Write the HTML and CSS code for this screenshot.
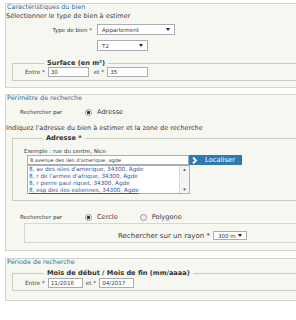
FILE: index.html
```html
<!DOCTYPE html>
<html>
  <head>
    <meta charset="utf-8" />
    <title>estimation</title>
    <link rel="stylesheet" href="styles.css">
  </head>
  <body>
    <div class="page">
      <div class="bloc bloc-bien">
        <div class="titre">Caractéristiques du bien</div>
        <div class="texte">Sélectionner le type de bien à estimer</div>
        <div class="ligne-type">
          <span class="libelle">Type de bien *</span>
          <span class="select type">Appartement<i class="fleche"></i></span>
        </div>
        <div class="ligne-type second">
          <span class="libelle"></span>
          <span class="select piece">T2<i class="fleche"></i></span>
        </div>
        <fieldset class="groupe surface">
          <legend>Surface (en m²)</legend>
          <div class="plage">
            <span>Entre *</span>
            <span class="champ">30</span>
            <span class="et">et *</span>
            <span class="champ">35</span>
          </div>
        </fieldset>
      </div>

      <div class="bloc bloc-perimetre">
        <div class="titre">Périmètre de recherche</div>
        <div class="choix">
          <span class="choix-libelle">Rechercher par</span>
          <span class="radio coche"></span>
          <span class="option">Adresse</span>
        </div>
        <div class="texte indication">Indiquez l'adresse du bien à estimer et la zone de recherche</div>
        <fieldset class="groupe adresse">
          <legend>Adresse *</legend>
          <div class="exemple">Exemple : rue du centre, Nice</div>
          <div class="saisie">
            <span class="champ long">8 avenue des iles d'amerique, agde</span>
            <span class="bouton">
              <svg width="6" height="7" viewBox="0 0 6 7"><polyline points="1,0.5 4,3.5 1,6.5" fill="none" stroke="#fff" stroke-width="1.8"/></svg>
              Localiser
            </span>
          </div>
          <div class="liste">
            <ul>
              <li>8, av des isles d'amerique, 34300, Agde</li>
              <li>8, r de l'armee d'afrique, 34300, Agde</li>
              <li>8, r pierre paul riquet, 34300, Agde</li>
              <li class="survol">8, esp des iles eoliennes, 34300, Agde</li>
            </ul>
            <div class="defilement">
              <span>▴</span>
              <span>▾</span>
            </div>
          </div>
        </fieldset>
        <div class="choix zone">
          <span class="choix-libelle">Rechercher par</span>
          <span class="radio coche"></span>
          <span class="option">Cercle</span>
          <span class="radio autre"></span>
          <span class="option">Polygone</span>
        </div>
        <div class="rayon">
          <span>Rechercher sur un rayon *</span>
          <span class="select metres">300 m<i class="fleche"></i></span>
        </div>
      </div>

      <div class="bloc bloc-periode">
        <div class="titre">Période de recherche</div>
        <fieldset class="groupe mois">
          <legend>Mois de début / Mois de fin (mm/aaaa)</legend>
          <div class="plage">
            <span>Entre *</span>
            <span class="champ court">11/2016</span>
            <span>et *</span>
            <span class="champ court">04/2017</span>
          </div>
        </fieldset>
      </div>
    </div>
  </body>
</html>
```

FILE: styles.css
```css
html { font-family: "DejaVu Sans", Verdana, sans-serif; }

body {
  margin: 0;
  background: #fff;
  color: #3a3a3a;
  overflow: hidden;
}

.page {
  width: 340px;
  padding: 3px 0 0 5px;
}

.bloc {
  background: #f6f7f0;
  border: 1px solid #d3d5cb;
  margin-bottom: 6px;
  padding: 0 0 6px;
}
.bloc-perimetre {
  margin-bottom: 7px;
  padding-bottom: 7px;
}
.bloc-periode {
  padding-bottom: 9px;
}

.titre {
  color: #2f6fa6;
  font-size: 6.4px;
  line-height: 7px;
  padding-left: 1px;
}

.texte {
  font-size: 6.5px;
  line-height: 9px;
  margin-top: 1px;
}

/* type de bien */
.ligne-type {
  display: flex;
  align-items: center;
  margin-top: 3px;
}
.ligne-type.second {
  margin-top: 5px;
}
.libelle {
  width: 86px;
  margin-right: 5px;
  text-align: right;
  font-size: 5.5px;
}

.select {
  display: flex;
  align-items: center;
  box-sizing: border-box;
  height: 11px;
  padding-left: 4px;
  border: 1px solid #a9aeb3;
  background: #fff;
  font-size: 5.6px;
}
.select.type { width: 78px; }
.select.piece { width: 51px; }
.select.metres {
  width: 34px;
  height: 9px;
  margin-left: 3px;
}
.fleche {
  margin: 0 4px 0 auto;
  border-left: 2px solid transparent;
  border-right: 2px solid transparent;
  border-top: 3px solid #222;
}

/* groupes */
.groupe {
  margin: 9px 0 0 6px;
  padding: 0 0 3px 12px;
  border: 1px solid #c9cbc1;
  min-width: 0;
}
.groupe legend {
  font-size: 6.6px;
  font-weight: bold;
  line-height: 7px;
  margin-left: 19px;
  padding: 0 3px;
  color: #333;
}

.plage {
  display: flex;
  align-items: center;
  gap: 3px;
  font-size: 5.7px;
}
.plage .et {
  margin-left: 2px;
}

.champ {
  box-sizing: border-box;
  width: 41px;
  height: 10px;
  padding-left: 2px;
  border: 1px solid #a9aeb3;
  background: #fff;
  font-size: 5.6px;
  line-height: 8px;
}
.champ.court { width: 35px; }

/* perimetre */
.choix {
  display: flex;
  align-items: center;
  margin-top: 6px;
  padding-left: 14px;
  line-height: 9px;
}
.choix-libelle {
  width: 65px;
  font-size: 5.5px;
}
.radio {
  box-sizing: border-box;
  width: 7px;
  height: 7px;
  border: 1px solid #9a9a9a;
  border-radius: 50%;
  background: #f2f2f2;
}
.radio.coche {
  background: radial-gradient(circle, #333 1.3px, #eee 1.8px);
}
.option {
  margin-left: 5px;
  font-size: 6.6px;
}
.zone {
  margin-top: 12px;
}
.zone .radio.autre {
  margin-left: 22px;
}

.indication {
  margin-top: 7px;
}

.groupe.adresse {
  margin-top: 2px;
  padding: 0 0 6px 11px;
}
.exemple {
  margin-top: 6px;
  font-size: 5.5px;
  line-height: 7px;
}
.saisie {
  display: flex;
  margin-left: 3px;
}
.champ.long {
  width: 162px;
  font-size: 5.1px;
}
.bouton {
  display: flex;
  align-items: center;
  gap: 7px;
  width: 53px;
  height: 10px;
  box-sizing: border-box;
  padding-left: 3px;
  background: #2b7bb4;
  color: #fff;
  font-size: 6.8px;
}

.liste {
  display: flex;
  box-sizing: border-box;
  width: 163px;
  height: 29px;
  margin-left: 3px;
  border: 1px solid #a9aeb3;
  background: #fff;
}
.liste ul {
  flex: 1;
  margin: 0;
  padding: 0 0 0 1px;
  list-style: none;
  color: #3853a4;
  font-size: 5.7px;
  line-height: 7px;
}
.liste .survol {
  text-decoration: underline;
}
.defilement {
  display: flex;
  flex-direction: column;
  justify-content: space-between;
  align-items: center;
  width: 9px;
  border-left: 1px solid #dcdcdc;
  background: #f4f4f4;
  font-size: 5px;
  line-height: 7px;
  color: #555;
}

.rayon {
  display: flex;
  align-items: center;
  margin: 1px 0 0 18px;
  padding: 7px 0 2px 93px;
  border: 1px solid #d6d8ce;
  font-size: 7px;
}

.groupe.mois {
  margin-top: 4px;
  padding: 1px 0 2px 12px;
}
```
